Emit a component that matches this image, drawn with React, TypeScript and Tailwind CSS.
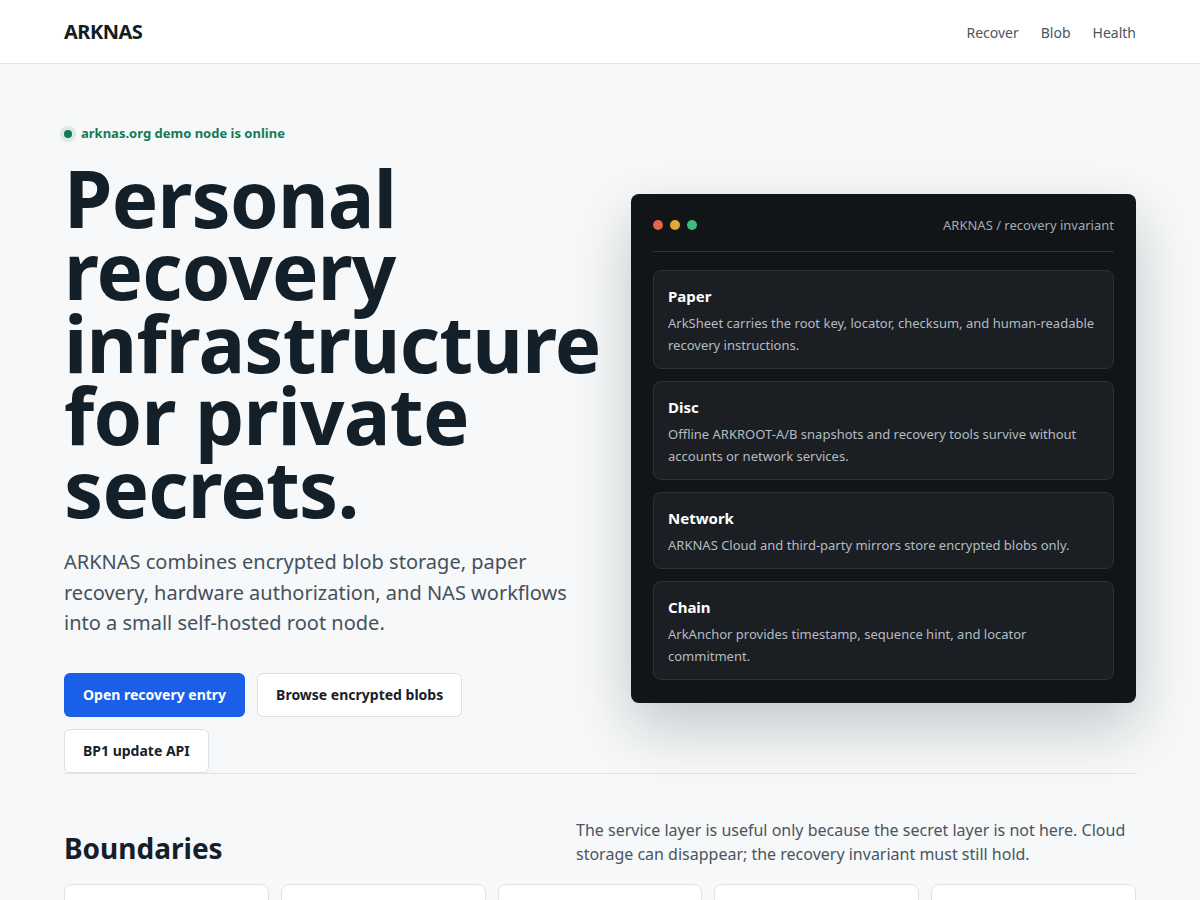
import React from 'react';

const layers = [
  {
    title: 'Paper',
    body: 'ArkSheet carries the root key, locator, checksum, and human-readable recovery instructions.',
  },
  {
    title: 'Disc',
    body: 'Offline ARKROOT-A/B snapshots and recovery tools survive without accounts or network services.',
  },
  {
    title: 'Network',
    body: 'ARKNAS Cloud and third-party mirrors store encrypted blobs only.',
  },
  {
    title: 'Chain',
    body: 'ArkAnchor provides timestamp, sequence hint, and locator commitment.',
  },
];

const boundaries = [
  { title: 'Root key', body: 'Never leaves paper or the hardware authorizer.' },
  { title: 'Blobs', body: 'Encrypted before they reach any mirror.' },
  { title: 'Locator', body: 'Committed on chain, resolvable offline.' },
  { title: 'Updates', body: 'BP1 packages are signed and verified locally.' },
  { title: 'NAS', body: 'Workflows run on the root node you host.' },
];

function Header() {
  return (
    <header className="border-b border-[#dfe3e7] bg-white">
      <div className="mx-auto flex h-[63px] max-w-[1072px] items-center justify-between">
        <a className="text-[20px] font-bold tracking-tight text-[#141c22]">ARKNAS</a>
        <nav className="flex items-center gap-[22px] pt-[2px] text-[14px] text-[#4a5560]">
          <a>Recover</a>
          <a>Blob</a>
          <a>Health</a>
        </nav>
      </div>
    </header>
  );
}

function RecoveryPanel() {
  return (
    <div className="rounded-lg bg-[#111518] px-[22px] pb-[23px] pt-[22px] shadow-[0_24px_60px_rgba(17,24,32,0.22)]">
      <div className="flex items-center justify-between border-b border-[#2a3036] pb-[16px]">
        <div className="flex items-center gap-[7px]">
          <span className="h-[10px] w-[10px] rounded-full bg-[#e0654b]" />
          <span className="h-[10px] w-[10px] rounded-full bg-[#e2a93a]" />
          <span className="h-[10px] w-[10px] rounded-full bg-[#3dbd7d]" />
        </div>
        <span className="text-[13px] text-[#a3abb3]">ARKNAS / recovery invariant</span>
      </div>
      <div className="mt-[18px] flex flex-col gap-3">
        {layers.map((l) => (
          <div
            key={l.title}
            className="rounded-lg border border-[#2c3238] bg-[#1b1f23] px-[14px] pb-[12px] pt-[14px]"
          >
            <div className="text-[15px] font-bold leading-[22px] text-white">{l.title}</div>
            <p className="mt-[5px] text-[13px] leading-[22px] text-[#b4bbc2]">{l.body}</p>
          </div>
        ))}
      </div>
    </div>
  );
}

export default function App() {
  return (
    <div className="min-h-screen bg-[#f6f8f9] text-[#121b21]" style={{ fontFamily: '"Noto Sans", "Open Sans", sans-serif' }}>
      <Header />
      <main className="mx-auto max-w-[1072px]">
        {/* Hero */}
        <section className="grid grid-cols-[minmax(0,1fr)_505px] items-center gap-8 border-b border-[#dfe3e7] pt-[60px]">
          <div>
            <div className="flex items-center gap-[5px] text-[13px] font-bold text-[#157a55]">
              <span className="-ml-1 flex h-4 w-4 items-center justify-center rounded-full bg-[#dfe8e6]">
                <span className="h-2 w-2 rounded-full bg-[#137a52]" />
              </span>
              arknas.org demo node is online
            </div>
            <h1 className="mt-[18px] text-[78px] font-bold leading-[72.5px] tracking-[-0.01em] text-[#142029]">
              Personal recovery infrastructure for private secrets.
            </h1>
            <p className="mt-[23px] text-[20px] leading-[30.5px] text-[#45515c]">
              ARKNAS combines encrypted blob storage, paper recovery, hardware authorization, and NAS workflows
              into a small self-hosted root node.
            </p>
            <div className="mt-[34px] flex flex-wrap gap-3">
              <button className="h-11 rounded-md bg-[#1a5fe8] px-[19px] text-[14px] font-bold text-white">
                Open recovery entry
              </button>
              <button className="h-11 rounded-md border border-[#dbe0e5] bg-white px-[18px] text-[14px] font-bold text-[#17212a]">
                Browse encrypted blobs
              </button>
              <button className="h-11 rounded-md border border-[#dbe0e5] bg-white px-[18px] text-[14px] font-bold text-[#17212a]">
                BP1 update API
              </button>
            </div>
          </div>
          <RecoveryPanel />
        </section>

        {/* Boundaries */}
        <section className="pt-11 pb-16">
          <div className="flex items-end justify-between">
            <h2 className="text-[28px] font-bold leading-9 text-[#142029]">Boundaries</h2>
            <p className="max-w-[560px] text-[16px] leading-6 text-[#4a5560]">
              The service layer is useful only because the secret layer is not here. Cloud storage can disappear;
              the recovery invariant must still hold.
            </p>
          </div>
          <div className="mt-[18px] grid grid-cols-5 gap-3">
            {boundaries.map((b) => (
              <div key={b.title} className="rounded-lg border border-[#dfe3e7] bg-white p-5">
                <div className="text-[15px] font-bold text-[#142029]">{b.title}</div>
                <p className="mt-1 text-[13px] leading-5 text-[#4a5560]">{b.body}</p>
              </div>
            ))}
          </div>
        </section>
      </main>
    </div>
  );
}
